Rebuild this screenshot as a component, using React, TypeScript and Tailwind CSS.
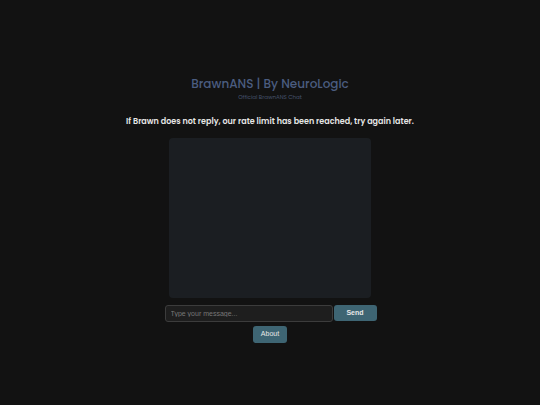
export default function App() {
  return (
    <div className="min-h-screen w-full bg-[#121212] flex flex-col items-center pt-[75px] font-['Poppins','Inter','Noto_Sans',sans-serif]">
      <h1 className="text-[12px] leading-[17px] font-medium text-[#4b5d80]">BrawnANS | By NeuroLogic</h1>
      <p className="text-[5.5px] leading-[8px] text-[#46536d] mt-[1px]">Official BrawnANS Chat</p>
      <p className="text-[8px] leading-[12px] font-semibold text-[#e6e6e6] mt-[15px]">
        If Brawn does not reply, our rate limit has been reached, try again later.
      </p>
      <div className="w-[202px] h-[160px] mt-[10px] rounded-[4px] bg-[#1b1e22]"></div>
      <div className="flex mt-[7px] ml-[1px] font-['Liberation_Sans',Arial,sans-serif]">
        <input
          type="text"
          placeholder="Type your message..."
          className="w-[168px] h-[17px] px-[5px] text-[7px] text-[#ddd] bg-[#1e1e1e] border border-[#3c3c3c] rounded-[3px] placeholder:text-[#777] outline-none"
        />
        <button className="w-[43px] h-[16px] ml-px rounded-[3px] bg-[#3e6573] text-[#e8e8e8] text-[7px] font-bold">
          Send
        </button>
      </div>
      <button className="mt-[4px] w-[34px] h-[17px] rounded-[3px] bg-[#3e6573] text-[#e8e8e8] text-[7px] font-['Liberation_Sans',Arial,sans-serif]">
        About
      </button>
    </div>
  );
}
